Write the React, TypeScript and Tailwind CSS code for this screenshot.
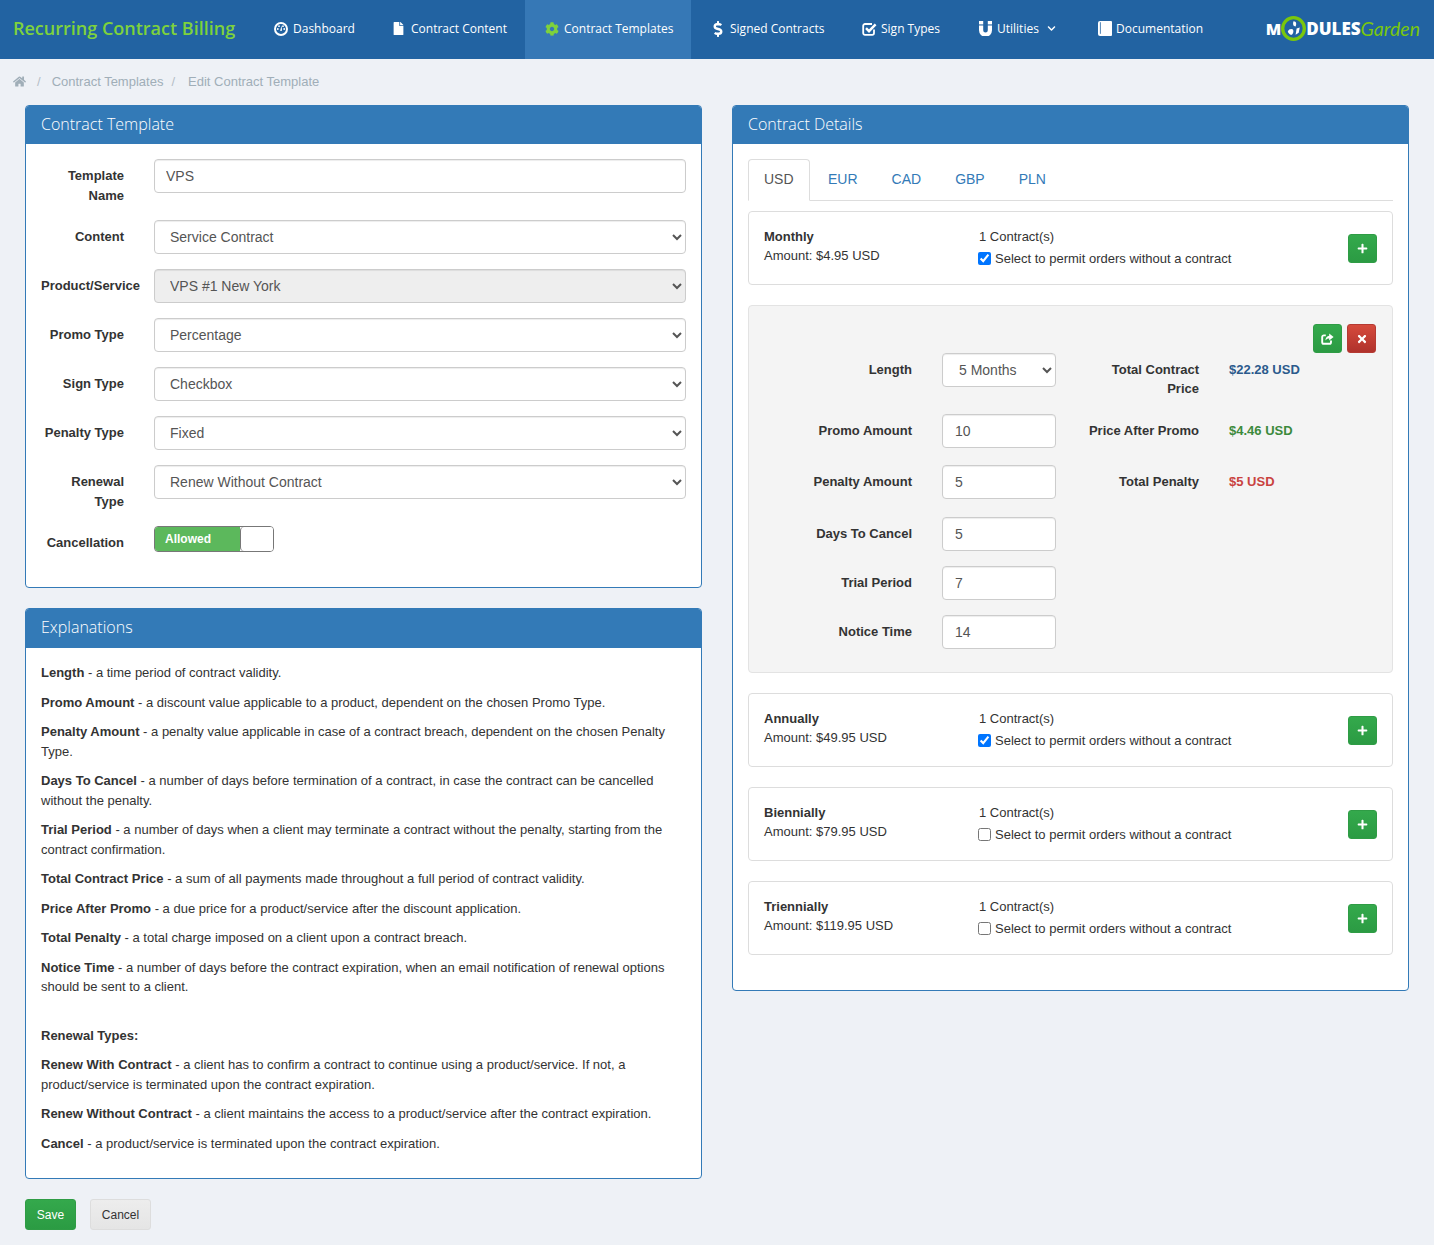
import React from 'react';
import { FaHome, FaFile, FaCog, FaDollarSign, FaChevronDown, FaPlus, FaTimes } from 'react-icons/fa';

const GaugeIcon = () => (
  <svg viewBox="0 0 14 14" className="w-[14px] h-[14px]" fill="#fff">
    <circle cx="7" cy="7" r="6" fill="none" stroke="#fff" strokeWidth="2" />
    <circle cx="3.8" cy="7" r="0.9" />
    <circle cx="5" cy="4.2" r="0.9" />
    <circle cx="9" cy="4.2" r="0.9" />
    <circle cx="10.2" cy="7" r="0.9" />
    <path d="M6.2 8.4 7.6 3.6 8 8.6a1 1 0 0 1-1.8-.2z" />
  </svg>
);

const CheckSquareIcon = () => (
  <svg viewBox="0 0 15 14" className="w-[15px] h-[14px]" fill="none" stroke="#fff">
    <path d="M12 7.5V11a1.8 1.8 0 0 1-1.8 1.8H3A1.8 1.8 0 0 1 1.2 11V3.8A1.8 1.8 0 0 1 3 2h7" strokeWidth="1.8" />
    <path d="M4 6.2 7 9.2 13.6 2.4" strokeWidth="2.4" />
  </svg>
);

const MagnetIcon = () => (
  <svg viewBox="0 0 13 15" className="w-[13px] h-[15px]" fill="#fff">
    <rect x="0" y="0" width="4.2" height="3.4" />
    <rect x="8.8" y="0" width="4.2" height="3.4" />
    <path d="M0 4.4h4.2V9.3a2.3 2.3 0 0 0 4.6 0V4.4H13v4.9a6.5 6.5 0 0 1-13 0z" />
  </svg>
);

const BookIcon = () => (
  <svg viewBox="0 0 14 15" className="w-[14px] h-[15px]" fill="#fff">
    <path d="M2 0h11a1 1 0 0 1 1 1v13a1 1 0 0 1-1 1H2a2 2 0 0 1-2-2V2a2 2 0 0 1 2-2z" />
    <path d="M2.4 1.2v11.6" stroke="#2263a2" strokeWidth="0.8" />
  </svg>
);

const ShareIcon = () => (
  <svg viewBox="0 0 13 12" className="w-[13px] h-[12px]" fill="none" stroke="#fff">
    <path d="M10 7.6v1.6a1.6 1.6 0 0 1-1.6 1.6H2.8a1.6 1.6 0 0 1-1.6-1.6V4a1.6 1.6 0 0 1 1.6-1.6h2" strokeWidth="1.9" />
    <path d="M8.2 0.6 12.6 4 8.2 7.4V5.4C6.6 5.4 5.2 6 4.4 7.6 4.4 5 6 3 8.2 2.8z" fill="#fff" stroke="none" />
  </svg>
);

const navItems = [
  { label: 'Dashboard', icon: <GaugeIcon />, cls: 'w-[118px] pl-[18px] gap-[5px]' },
  { label: 'Contract Content', icon: <FaFile size={13} />, cls: 'w-[151px] pl-[18px] gap-[6px]' },
  { label: 'Contract Templates', icon: <FaCog size={14} className="text-[#7ed23c]" />, cls: 'w-[166px] pl-[20px] gap-[5px] bg-[#3678b6]' },
  { label: 'Signed Contracts', icon: <FaDollarSign size={16} />, cls: 'w-[148px] pl-[19px] gap-[4px]' },
  { label: 'Sign Types', icon: <CheckSquareIcon />, cls: 'w-[116px] pl-[23px] gap-[4px]' },
  { label: 'Utilities', icon: <MagnetIcon />, cls: 'w-[120px] pl-[24px] gap-[5px]', caret: true },
  { label: 'Documentation', icon: <BookIcon />, cls: 'w-[140px] pl-[23px] gap-[4px]' },
];

const Panel = ({ title, className, headCls, children }: { title: string; className: string; headCls: string; children: React.ReactNode }) => (
  <div className={`bg-white border border-[#337ab7] rounded-[4px] overflow-hidden ${className}`}>
    <div className={`bg-[#337ab7] text-white text-[16px] leading-[37px] px-[15px] font-light font-['Open_Sans',sans-serif] ${headCls}`}>{title}</div>
    {children}
  </div>
);

const inputCls = 'h-[34px] border border-[#ccc] rounded-[4px] text-[14px] text-[#555] shadow-[inset_0_1px_1px_rgba(0,0,0,0.075)]';

const FormRow = ({ label, value, select, disabled, nowrap, className }: { label: string; value: string; select?: boolean; disabled?: boolean; nowrap?: boolean; className: string }) => (
  <div className={`flex gap-[30px] ${className}`}>
    <label className={`w-[83px] shrink-0 pt-[7px] text-right font-bold text-[#333] leading-[20px] ${nowrap ? 'whitespace-nowrap' : ''}`}>{label}</label>
    {select ? (
      <select defaultValue={value} disabled={disabled} className={`${inputCls} w-[532px] px-[11px] opacity-100 ${disabled ? 'bg-[#eeeeee]' : 'bg-white'}`}>
        <option>{value}</option>
      </select>
    ) : (
      <input defaultValue={value} className={`${inputCls} w-[532px] px-[11px] bg-white`} />
    )}
  </div>
);

const SquareBtn = ({ color, className = '', children }: { color: 'green' | 'red'; className?: string; children: React.ReactNode }) => (
  <button className={`w-[29px] h-[29px] rounded-[3px] text-white flex items-center justify-center border bg-linear-to-b ${color === 'green' ? 'from-[#34a94c] to-[#2b9b43] border-[#2f9c45]' : 'from-[#d64a3c] to-[#b0322c] border-[#b53a32]'} ${className}`}>
    {children}
  </button>
);

const BillingCard = ({ name, amount, checked }: { name: string; amount: string; checked: boolean }) => (
  <div className="h-[74px] mb-[20px] border border-[#ddd] rounded-[4px] bg-white flex px-[15px] pt-[15px]">
    <div className="w-[215px] leading-[19px] text-[#333]">
      <div className="font-bold">{name}</div>
      <div>Amount: {amount}</div>
    </div>
    <div className="flex-1 leading-[19px] text-[#333]">
      <div>1 Contract(s)</div>
      <label className="flex items-center gap-[4px] mt-[3px] -ml-[1px]">
        <input type="checkbox" defaultChecked={checked} className="w-[13px] h-[13px]" />
        <span>Select to permit orders without a contract</span>
      </label>
    </div>
    <SquareBtn color="green" className="mt-[7px]"><FaPlus size={11} /></SquareBtn>
  </div>
);

const DetailRow = ({ label, value, select, right, rightValue, rightColor, className }: { label: string; value: string; select?: boolean; right?: string; rightValue?: string; rightColor?: string; className: string }) => (
  <div className={`flex ${className}`}>
    <label className="w-[148px] pt-[7px] text-right font-bold text-[#333] leading-[20px]">{label}</label>
    {select ? (
      <select defaultValue={value} className={`${inputCls} ml-[30px] w-[114px] px-[12px] bg-white`}><option>{value}</option></select>
    ) : (
      <input defaultValue={value} className={`${inputCls} ml-[30px] w-[114px] px-[12px] bg-white`} />
    )}
    {right && (
      <>
        <div className="ml-[28px] w-[115px] pt-[7px] text-right font-bold text-[#333] leading-[19px]">{right}</div>
        <div className={`ml-[30px] pt-[7px] font-bold leading-[19px] ${rightColor}`}>{rightValue}</div>
      </>
    )}
  </div>
);

const explanations: [string, string][] = [
  ['Length', ' - a time period of contract validity.'],
  ['Promo Amount', ' - a discount value applicable to a product, dependent on the chosen Promo Type.'],
  ['Penalty Amount', ' - a penalty value applicable in case of a contract breach, dependent on the chosen Penalty Type.'],
  ['Days To Cancel', ' - a number of days before termination of a contract, in case the contract can be cancelled without the penalty.'],
  ['Trial Period', ' - a number of days when a client may terminate a contract without the penalty, starting from the contract confirmation.'],
  ['Total Contract Price', ' - a sum of all payments made throughout a full period of contract validity.'],
  ['Price After Promo', ' - a due price for a product/service after the discount application.'],
  ['Total Penalty', ' - a total charge imposed on a client upon a contract breach.'],
  ['Notice Time', ' - a number of days before the contract expiration, when an email notification of renewal options should be sent to a client.'],
];

const renewals: [string, string][] = [
  ['Renew With Contract', ' - a client has to confirm a contract to continue using a product/service. If not, a product/service is terminated upon the contract expiration.'],
  ['Renew Without Contract', ' - a client maintains the access to a product/service after the contract expiration.'],
  ['Cancel', ' - a product/service is terminated upon the contract expiration.'],
];

export default function App() {
  return (
    <div className="min-h-[1245px] bg-[#eef1f6] font-['Liberation_Sans',Arial,sans-serif] text-[13px] text-[#333]">
      {/* top bar */}
      <div className="h-[59px] bg-[#2263a2] flex items-center font-['Open_Sans',sans-serif] text-white">
        <div className="w-[256px] pl-[13px] pb-[2px] text-[18px] font-semibold text-[#7ed23c] whitespace-nowrap">Recurring Contract Billing</div>
        {navItems.map((item) => (
          <div key={item.label} className={`h-full pb-[2px] flex items-center text-[12px] whitespace-nowrap ${item.cls}`}>
            {item.icon}
            <span>{item.label}</span>
            {item.caret && <FaChevronDown size={9} className="ml-[3px]" />}
          </div>
        ))}
        <div className="ml-auto pr-[14px] pb-[2px] flex items-center text-[17px] leading-none whitespace-nowrap">
          <span className="font-extrabold text-[16px]">M</span>
          <svg viewBox="0 0 24 24" className="w-[25px] h-[25px]">
            <circle cx="12" cy="12" r="10.4" fill="none" stroke="#7ac70c" strokeWidth="3.2" />
            <path d="M12 5c3 0 3 3 2 5-2 0-3-2-2-5zM6.5 15c1-3 4-3 5-2 1 2 0 4-1 5-2 0-3-1-4-3zM15 12l3-1-1 5-3 2z" fill="#fff" />
          </svg>
          <span className="font-extrabold">DULES</span>
          <span className="font-['Lato',sans-serif] font-normal italic text-[19.5px] text-[#7ac70c]">Garden</span>
        </div>
      </div>

      {/* breadcrumb */}
      <div className="h-[46px] pb-[1px] flex items-center pl-[13px] text-[#a0aeb8]">
        <FaHome size={13} />
        <span className="ml-[11px] text-[#b4bec6]">/</span>
        <span className="ml-[11px]">Contract Templates</span>
        <span className="ml-[8px] text-[#b4bec6]">/</span>
        <span className="ml-[13px]">Edit Contract Template</span>
      </div>

      <div className="flex gap-[30px] px-[25px]">
        <div className="w-[677px]">
          <Panel title="Contract Template" headCls="h-[38px]" className="h-[483px]">
            <div className="pt-[15px] pl-[15px]">
              <FormRow label="Template Name" value="VPS" className="h-[61px]" />
              <FormRow label="Content" value="Service Contract" select className="h-[49px]" />
              <FormRow label="Product/Service" value="VPS #1 New York" select disabled nowrap className="h-[49px]" />
              <FormRow label="Promo Type" value="Percentage" select className="h-[49px]" />
              <FormRow label="Sign Type" value="Checkbox" select className="h-[49px]" />
              <FormRow label="Penalty Type" value="Fixed" select className="h-[49px]" />
              <FormRow label="Renewal Type" value="Renew Without Contract" select className="h-[61px]" />
              <div className="flex gap-[30px]">
                <label className="w-[83px] pt-[7px] text-right font-bold leading-[20px]">Cancellation</label>
                <div className="w-[120px] h-[26px] border border-[#777] rounded-[4px] overflow-hidden flex">
                  <div className="w-[85px] bg-[#5cb85c] text-white font-bold text-[12px] leading-[24px] pl-[10px]">Allowed</div>
                  <div className="flex-1 bg-white border-l border-[#777] rounded-l-[4px]" />
                </div>
              </div>
            </div>
          </Panel>

          <Panel title="Explanations" headCls="h-[39px]" className="mt-[20px] h-[571px]">
            <div className="pt-[15px] px-[15px] leading-[19.5px]">
              {explanations.map(([term, text]) => (
                <p key={term} className="mb-[10px]"><b>{term}</b>{text}</p>
              ))}
              <p className="mt-[29px] mb-[10px] font-bold">Renewal Types:</p>
              {renewals.map(([term, text]) => (
                <p key={term} className="mb-[10px]"><b>{term}</b>{text}</p>
              ))}
            </div>
          </Panel>

          <div className="mt-[20px] flex gap-[14px] text-[12px]">
            <button className="w-[51px] h-[31px] rounded-[3px] bg-linear-to-b from-[#34a94c] to-[#2b9b43] border border-[#2f9c45] text-white">Save</button>
            <button className="w-[61px] h-[31px] rounded-[3px] bg-linear-to-b from-[#ededed] to-[#e5e5e5] border border-[#ddd] text-[#333]">Cancel</button>
          </div>
        </div>

        <Panel title="Contract Details" headCls="h-[38px]" className="w-[677px] h-[886px]">
          <div className="pt-[15px] px-[15px] text-[13px]">
            <div className="flex h-[42px] border-b border-[#ddd] text-[14px] text-[#337ab7] mb-[10px]">
              <div className="w-[62px] h-[42px] pl-[15px] pt-[9px] border border-[#ddd] border-b-white rounded-t-[4px] bg-white text-[#555]">USD</div>
              <div className="pl-[18px] pt-[10px]">EUR</div>
              <div className="pl-[34px] pt-[10px]">CAD</div>
              <div className="pl-[34px] pt-[10px]">GBP</div>
              <div className="pl-[34px] pt-[10px]">PLN</div>
            </div>

            <BillingCard name="Monthly" amount="$4.95 USD" checked />

            <div className="h-[368px] mb-[20px] border border-[#e3e3e3] rounded-[4px] bg-[#f4f4f4] pt-[18px] pl-[15px] pr-[16px]">
              <div className="flex justify-end gap-[5px]">
                <SquareBtn color="green"><ShareIcon /></SquareBtn>
                <SquareBtn color="red"><FaTimes size={12} /></SquareBtn>
              </div>
              <DetailRow label="Length" value="5 Months" select right="Total Contract Price" rightValue="$22.28 USD" rightColor="text-[#2b5a8c]" className="h-[61px]" />
              <DetailRow label="Promo Amount" value="10" right="Price After Promo" rightValue="$4.46 USD" rightColor="text-[#3c8a3c]" className="h-[51px]" />
              <DetailRow label="Penalty Amount" value="5" right="Total Penalty" rightValue="$5 USD" rightColor="text-[#c9423f]" className="h-[52px]" />
              <DetailRow label="Days To Cancel" value="5" className="h-[49px]" />
              <DetailRow label="Trial Period" value="7" className="h-[49px]" />
              <DetailRow label="Notice Time" value="14" className="h-[49px]" />
            </div>

            <BillingCard name="Annually" amount="$49.95 USD" checked />
            <BillingCard name="Biennially" amount="$79.95 USD" checked={false} />
            <BillingCard name="Triennially" amount="$119.95 USD" checked={false} />
          </div>
        </Panel>
      </div>
    </div>
  );
}
